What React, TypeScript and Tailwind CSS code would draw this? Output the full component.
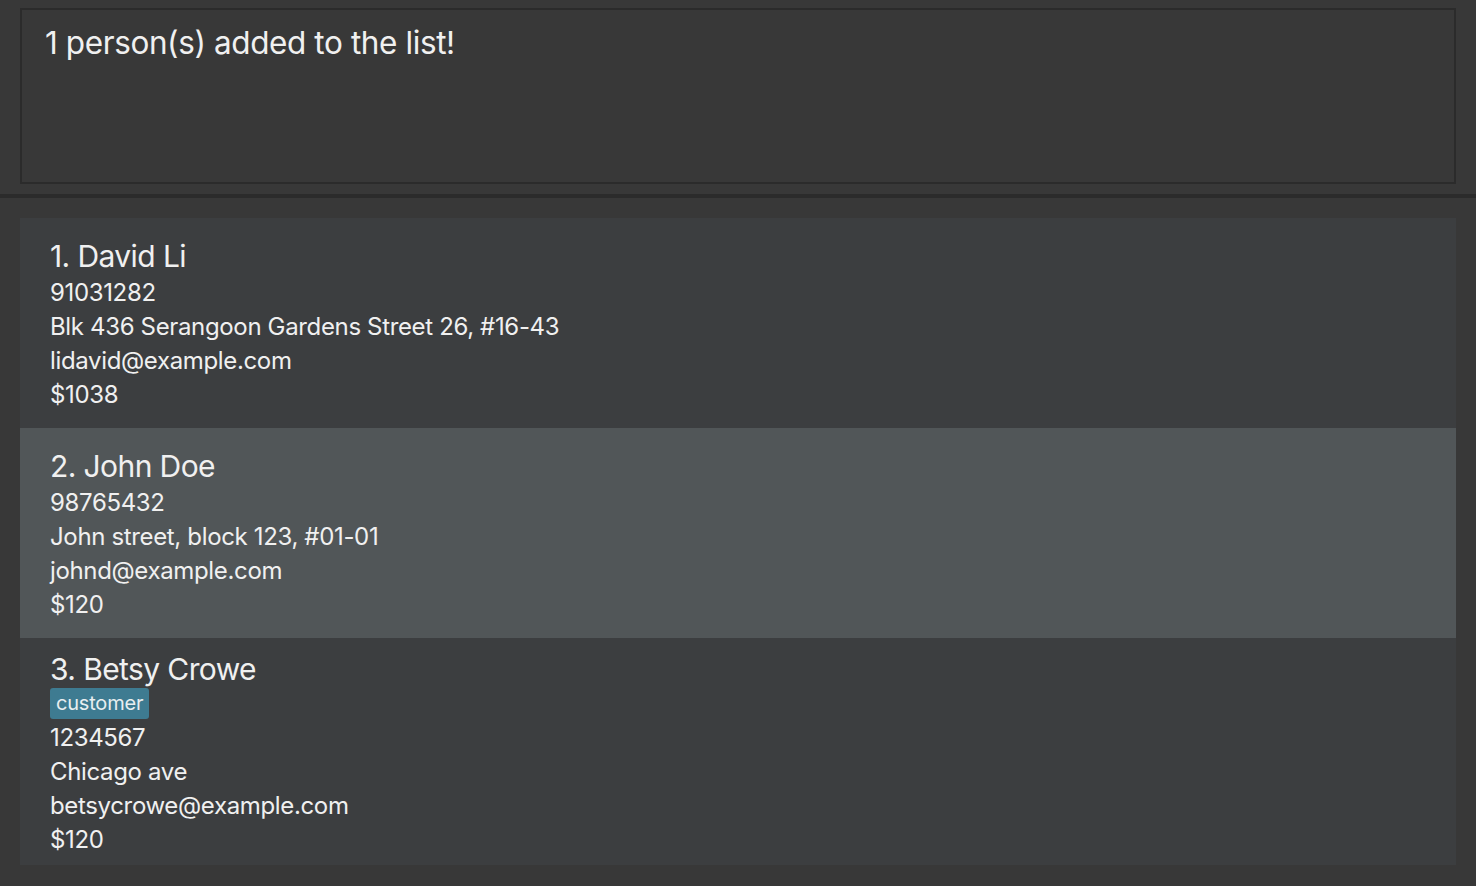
import React from 'react';

interface Person {
  name: string;
  tags: string[];
  phone: string;
  address: string;
  email: string;
  amount: string;
}

const persons: Person[] = [
  { name: 'David Li', tags: [], phone: '91031282', address: 'Blk 436 Serangoon Gardens Street 26, #16-43', email: 'lidavid@example.com', amount: '$1038' },
  { name: 'John Doe', tags: [], phone: '98765432', address: 'John street, block 123, #01-01', email: 'johnd@example.com', amount: '$120' },
  { name: 'Betsy Crowe', tags: ['customer'], phone: '1234567', address: 'Chicago ave', email: 'betsycrowe@example.com', amount: '$120' },
];

export default function App() {
  return (
    <div
      className="w-[1476px] h-[886px] bg-[#383838] flex flex-col overflow-hidden text-[#f0f0f0]"
      style={{ fontFamily: 'Inter, "Noto Sans", sans-serif' }}
    >
      {/* Result display */}
      <div className="px-5 pt-2 pb-[10px]">
        <div className="h-[176px] border-2 border-[#2b2b2b] bg-[#383838] px-[23px] pt-[13px]">
          <p className="text-[31.5px] leading-[40px] tracking-[-0.4px]">1 person(s) added to the list!</p>
        </div>
      </div>

      <div className="h-1 bg-[#2b2b2b]" />

      {/* Person list */}
      <div className="px-5 pt-5 flex flex-col">
        {persons.map((p, i) => (
          <div
            key={p.name}
            className={`px-[30px] ${i === 1 ? 'bg-[#515658]' : 'bg-[#3c3e40]'} ${
              p.tags.length ? 'pt-[12px] pb-[8px]' : 'pt-[19px] h-[210px]'
            }`}
          >
            <div className="text-[30px] leading-[38px] tracking-[-0.6px]">
              {i + 1}. {p.name}
            </div>
            {p.tags.length > 0 && (
              <div className="flex gap-2 pb-px">
                {p.tags.map((t) => (
                  <span key={t} className="bg-[#3e7b91] rounded-[3px] px-[6px] text-[20px] leading-[31px] tracking-[-0.2px] text-[#e8eef0]">
                    {t}
                  </span>
                ))}
              </div>
            )}
            <div className="text-[24px] leading-[34px] tracking-[-0.35px] pt-px">
              <div>{p.phone}</div>
              <div>{p.address}</div>
              <div>{p.email}</div>
              <div>{p.amount}</div>
            </div>
          </div>
        ))}
      </div>
    </div>
  );
}
